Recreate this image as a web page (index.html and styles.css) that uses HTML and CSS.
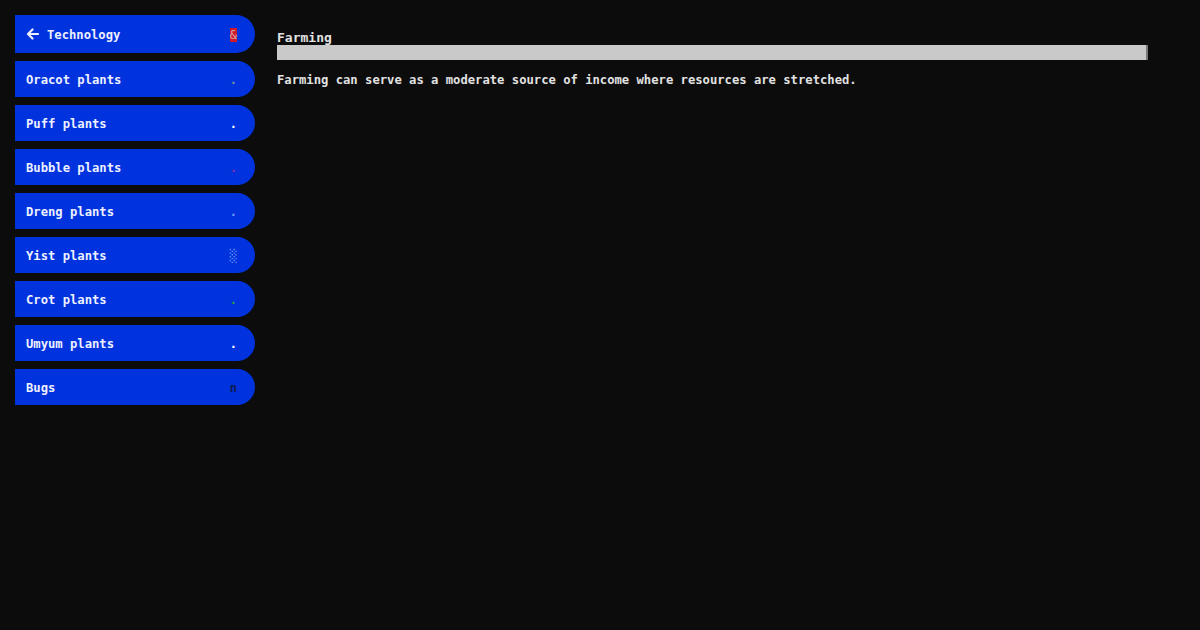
FILE: index.html
```html
<!DOCTYPE html>
<html lang="en">
<head>
  <meta charset="UTF-8">
  <meta name="viewport" content="width=device-width, initial-scale=1.0">
  <title>Farming</title>
  <link rel="stylesheet" href="styles.css">
</head>
<body>

<div id="layout">
  <div id="menu">
    <button class="menu-btn menu-back">
      <span class="label">
        <svg class="arrow" width="13" height="12" viewBox="0 0 13 12">
          <path d="M12 6H2M6.5 1.5L2 6l4.5 4.5" fill="none" stroke="#eef0ff" stroke-width="2.2" stroke-linecap="round" stroke-linejoin="round"/>
        </svg>
        Technology
      </span>
      <span class="glyph g-tech">&amp;</span>
    </button>
    <button class="menu-btn"><span class="label">Oracot plants</span><span class="glyph g-oracot">.</span></button>
    <button class="menu-btn"><span class="label">Puff plants</span><span class="glyph g-puff">.</span></button>
    <button class="menu-btn"><span class="label">Bubble plants</span><span class="glyph g-bubble">.</span></button>
    <button class="menu-btn"><span class="label">Dreng plants</span><span class="glyph g-dreng">.</span></button>
    <button class="menu-btn"><span class="label">Yist plants</span><span class="glyph g-yist">&#9617;</span></button>
    <button class="menu-btn"><span class="label">Crot plants</span><span class="glyph g-crot">.</span></button>
    <button class="menu-btn"><span class="label">Umyum plants</span><span class="glyph g-umyum">.</span></button>
    <button class="menu-btn"><span class="label">Bugs</span><span class="glyph g-bugs">n</span></button>
  </div>

  <div id="content">
    <h2 class="title">Farming</h2>
    <div class="bar"></div>
    <p class="desc">Farming can serve as a moderate source of income where resources are stretched.</p>
  </div>
</div>

</body>
</html>
```

FILE: styles.css
```css
body {
  margin: 0;
  background-color: #0c0c0c;
  color: #e2e2e2;
  font-family: "DejaVu Sans Mono", "Liberation Mono", monospace;
  font-weight: bold;
}

#layout {
  display: flex;
  gap: 22px;
  padding: 15px 52px 15px 15px;
}

#menu {
  width: 240px;
  flex-shrink: 0;
  display: flex;
  flex-direction: column;
  gap: 8px;
}

.menu-btn {
  display: flex;
  justify-content: space-between;
  align-items: center;
  height: 36px;
  padding: 2px 18px 0 11px;
  border: none;
  border-radius: 0 18px 18px 0;
  background-color: #0033dd;
  color: #eef0ff;
  font-family: inherit;
  font-weight: bold;
  font-size: 12.2px;
  text-align: left;
  cursor: pointer;
}

.menu-back {
  height: 38px;
  border-radius: 0 19px 19px 0;
}

.label {
  display: flex;
  align-items: center;
  gap: 8px;
}

.arrow {
  display: block;
  margin-top: -2px;
}

.glyph {
  font-size: 12px;
  line-height: 14px;
}

.g-tech {
  background-color: #d01a2a;
  color: #d8a8b0;
  font-weight: normal;
}
.g-oracot { color: #7a9a9a; }
.g-puff { color: #ffffff; }
.g-bubble { color: #8030b0; }
.g-dreng { color: #70a0ff; }
.g-yist { color: #8ab0ff; font-weight: normal; }
.g-crot { color: #30a040; }
.g-umyum { color: #ffffff; }
.g-bugs { color: #101a50; }

#content {
  flex: 1;
  padding-top: 16px;
}

.title {
  margin: 0;
  font-size: 13px;
  line-height: 14px;
}

.bar {
  height: 15px;
  background-color: #c9c9c9;
  border-right: 2px solid #777;
}

.desc {
  margin: 13px 0 0 0;
  font-size: 12.2px;
}
```
